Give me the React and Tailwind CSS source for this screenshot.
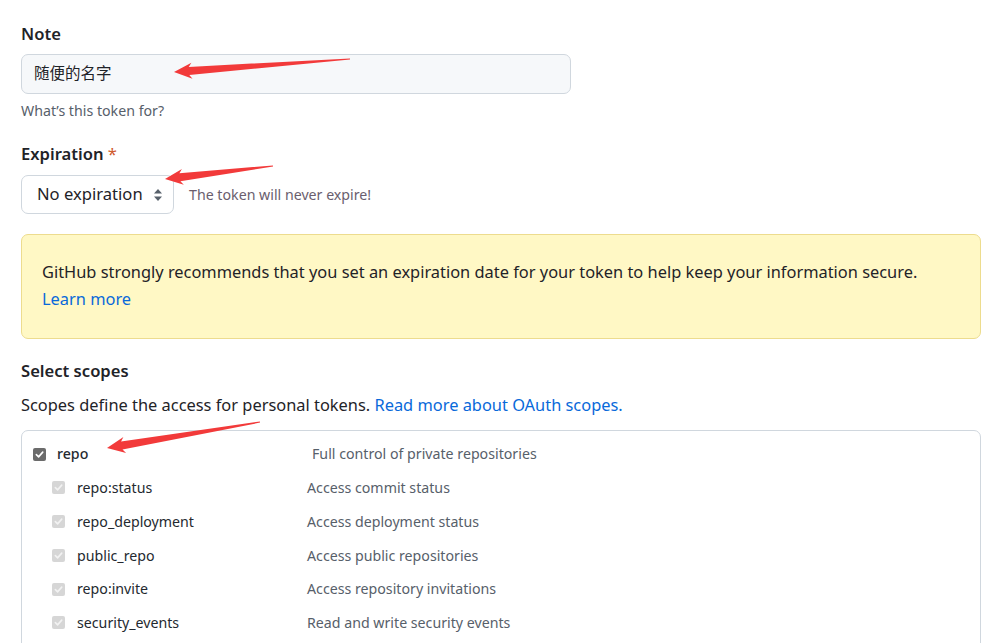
import React from "react";

const FONT = { fontFamily: '"Noto Sans", "Noto Sans CJK SC", sans-serif' };

const subScopes = [
  ["repo:status", "Access commit status"],
  ["repo_deployment", "Access deployment status"],
  ["public_repo", "Access public repositories"],
  ["repo:invite", "Access repository invitations"],
  ["security_events", "Read and write security events"],
];

function arrowPoints([tx, ty], [hx, hy]) {
  const dx = tx - hx;
  const dy = ty - hy;
  const len = Math.hypot(dx, dy);
  const ux = dx / len;
  const uy = dy / len;
  const nx = -uy;
  const ny = ux;
  const at = (d, w) => [hx + ux * d + nx * w, hy + uy * d + ny * w];
  const pts = [
    [hx, hy],
    at(18, 8),
    at(15, 4),
    [tx + nx * 0.6, ty + ny * 0.6],
    [tx - nx * 0.6, ty - ny * 0.6],
    at(15, -4),
    at(18, -8),
  ];
  return pts.map((p) => p.map((v) => v.toFixed(1)).join(",")).join(" ");
}

function Checkbox({ disabled }) {
  return (
    <span
      className={`flex items-center justify-center w-[13px] h-[13px] rounded-[2px] ${
        disabled ? "bg-[#d6d6d6]" : "bg-[#6b6b6b]"
      }`}
    >
      <svg width="9" height="9" viewBox="0 0 10 10">
        <path
          d="M1.5 5.2 L4 7.6 L8.6 2.4"
          fill="none"
          stroke={disabled ? "#f2f2f2" : "#ffffff"}
          strokeWidth="1.8"
          strokeLinecap="round"
          strokeLinejoin="round"
        />
      </svg>
    </span>
  );
}

export default function App() {
  return (
    <div
      className="relative w-[990px] h-[643px] overflow-hidden bg-white text-[#1f2328] pl-[21px] pr-[10px]"
      style={FONT}
    >
      {/* Note */}
      <div className="pt-[21px]">
        <div className="text-[16.6px] leading-[26px] font-semibold">Note</div>
        <div className="mt-[7px] w-[550px] h-[40px] rounded-[7px] border border-[#d0d7de] bg-[#f6f8fa] flex items-center px-[12px] text-[15.5px]">
          随便的名字
        </div>
        <div className="mt-[6px] text-[14.2px] leading-[21px] text-[#57606a]">What’s this token for?</div>
      </div>

      {/* Expiration */}
      <div className="mt-[20px]">
        <div className="text-[16.6px] leading-[26px] font-semibold">
          Expiration <span className="text-[#cf5a2e] font-normal">*</span>
        </div>
        <div className="mt-[8px] flex items-center">
          <div className="w-[153px] h-[39px] rounded-[7px] border border-[#d0d7de] bg-white flex items-center justify-between pl-[15px] pr-[10px] text-[16.6px]">
            <span>No expiration</span>
            <svg width="10" height="14" viewBox="0 0 10 14">
              <path d="M5 1 L9 5.5 H1 Z" fill="#57606a" />
              <path d="M5 13 L9 8.5 H1 Z" fill="#57606a" />
            </svg>
          </div>
          <span className="ml-[15px] text-[14.2px] text-[#6a5e6e]">The token will never expire!</span>
        </div>
      </div>

      {/* Warning */}
      <div className="mt-[20px] w-[960px] h-[105px] rounded-[7px] border border-[#eddc8e] bg-[#fff8c5] px-[20px] py-[23px] text-[16.4px] leading-[27px]">
        <div>GitHub strongly recommends that you set an expiration date for your token to help keep your information secure.</div>
        <a className="text-[#0969da]">Learn more</a>
      </div>

      {/* Scopes */}
      <div className="mt-[19px] text-[16.6px] leading-[26px] font-semibold">Select scopes</div>
      <div className="mt-[8px] text-[16.4px] leading-[26px]">
        Scopes define the access for personal tokens.{" "}
        <a className="text-[#0969da]">Read more about OAuth scopes.</a>
      </div>

      <div className="mt-[12px] w-[960px] h-[260px] rounded-[7px] border border-[#d0d7de] pt-[6px] text-[14.2px]">
        <div className="flex items-center h-[34px]">
          <div className="pl-[11px] w-[35px]">
            <Checkbox />
          </div>
          <div className="w-[255px] font-medium text-[#24292f]">repo</div>
          <div className="text-[#57606a]">Full control of private repositories</div>
        </div>
        {subScopes.map(([name, desc]) => (
          <div key={name} className="flex items-center h-[33.75px]">
            <div className="pl-[30px] w-[55px]">
              <Checkbox disabled />
            </div>
            <div className="w-[230px] text-[#24292f]">{name}</div>
            <div className="text-[#57606a]">{desc}</div>
          </div>
        ))}
      </div>

      {/* annotation arrows */}
      <svg className="absolute inset-0 pointer-events-none" width="990" height="643">
        <polygon points={arrowPoints([350, 59], [174, 72])} fill="#f23a3a" />
        <polygon points={arrowPoints([273, 166], [165, 179])} fill="#f23a3a" />
        <polygon points={arrowPoints([260, 422], [107, 448])} fill="#f23a3a" />
      </svg>
    </div>
  );
}
